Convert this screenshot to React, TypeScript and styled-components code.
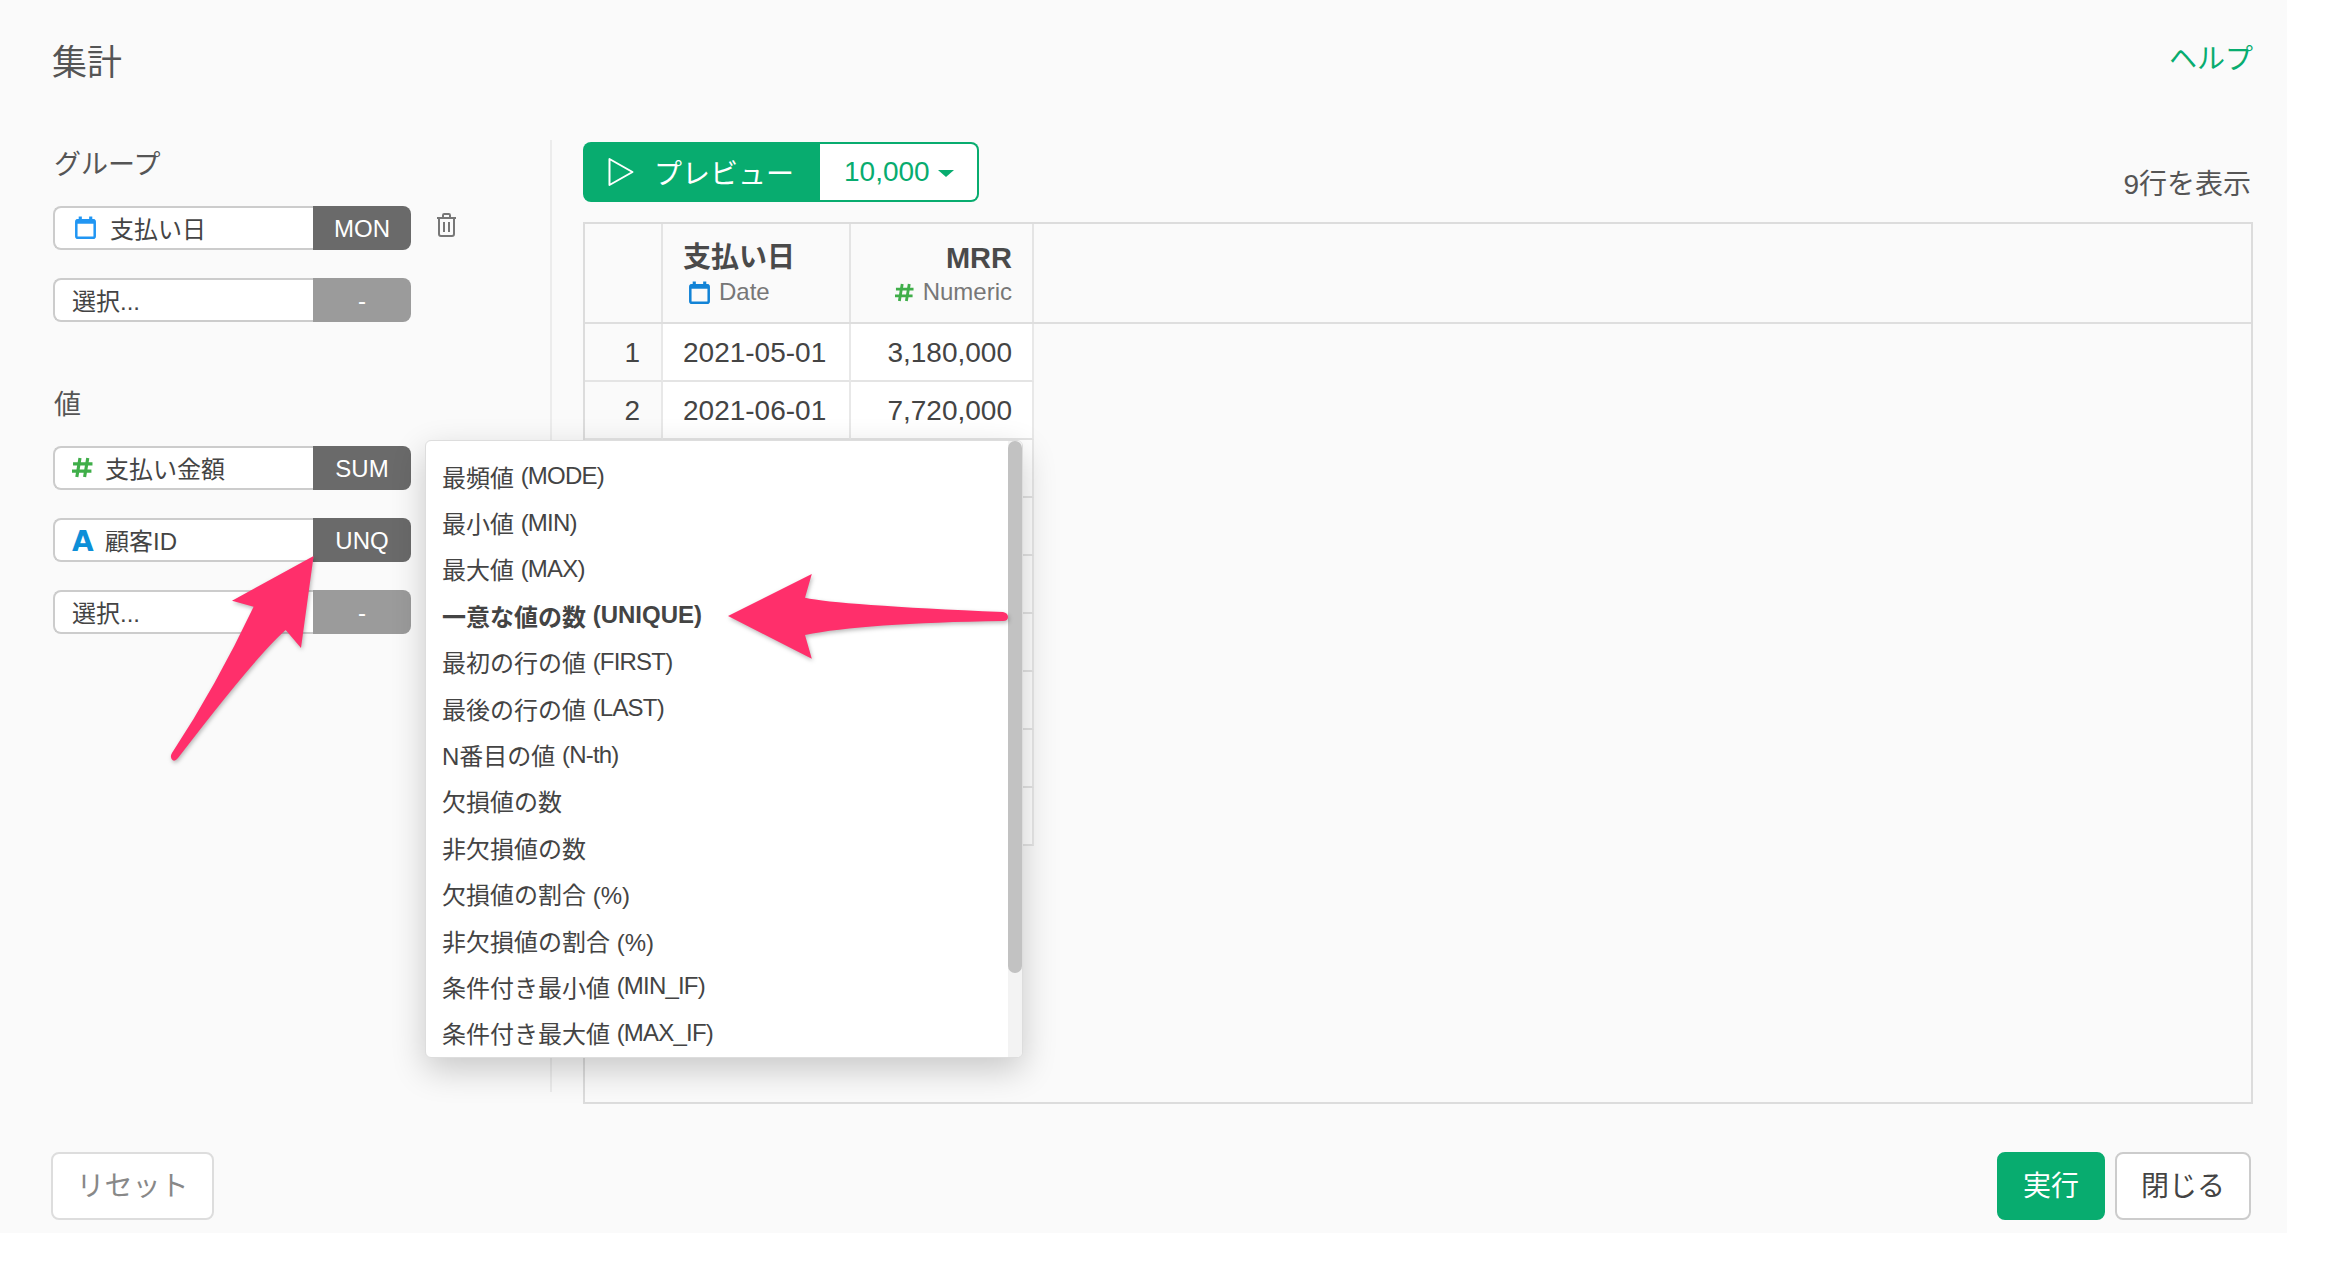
import styled, { createGlobalStyle } from 'styled-components'

const GREEN = '#08ac6f'
const TEXT = '#444'
const FONT = '"Liberation Sans", "Noto Sans CJK JP", sans-serif'

const GlobalStyle = createGlobalStyle`
  html, body { margin: 0; padding: 0; background: #fff; }
  * { box-sizing: border-box; }
  body { font-family: ${FONT}; color: ${TEXT}; }
`

const Panel = styled.div`
  position: relative;
  width: 2287px;
  height: 1233px;
  background: #fafafa;
  display: flex;
  flex-direction: column;
  overflow: hidden;
`
const Header = styled.header`
  height: 140px;
  padding: 38px 34px 0 52px;
  display: flex;
  justify-content: space-between;
  align-items: flex-start;
`
const Title = styled.h1`
  margin: 0;
  font-size: 35px;
  line-height: 50px;
  font-weight: 400;
  color: #555;
`
const HelpLink = styled.a`
  font-size: 28px;
  line-height: 44px;
  color: ${GREEN};
`
const Body = styled.div`
  display: flex;
  align-items: flex-start;
  padding-left: 53px;
  padding-right: 34px;
`
const Sidebar = styled.aside`
  width: 499px;
  height: 952px;
  border-right: 2px solid #ececec;
  padding-top: 8px;
`
const SectionLabel = styled.div<{ $top?: number }>`
  font-size: 27px;
  line-height: 34px;
  color: #555;
  margin-top: ${(p) => p.$top ?? 0}px;
  margin-bottom: 24px;
  padding-left: 1px;
`
const FieldRow = styled.div`
  display: flex;
  align-items: flex-start;
  gap: 25px;
  margin-bottom: 28px;
`
const FieldSelect = styled.div`
  width: 260px;
  height: 44px;
  background: #fff;
  border: 2px solid #ccc;
  border-right: none;
  border-radius: 8px 0 0 8px;
  display: flex;
  align-items: center;
  padding: 0 0 2px 17px;
  font-size: 24px;
  color: ${TEXT};
`
const Badge = styled.div<{ $off?: boolean }>`
  width: 98px;
  height: 44px;
  padding-top: 1px;
  background: ${(p) => (p.$off ? '#9b9b9b' : '#6a6a6a')};
  color: #fff;
  border-radius: 0 8px 8px 0;
  font-size: 24px;
  display: flex;
  align-items: center;
  justify-content: center;
`
const Field = styled.div`
  display: flex;
`
const IconSlot = styled.span<{ $w: number; $pad?: number }>`
  width: ${(p) => p.$w}px;
  padding-left: ${(p) => p.$pad ?? 0}px;
  display: inline-flex;
  align-items: center;
  flex: none;
`
const TypeLetter = styled.span`
  font-family: "DejaVu Sans", sans-serif;
  font-weight: 700;
  font-size: 28px;
  line-height: 1;
  color: #0d8fd8;
  margin-top: 5px;
`
const TrashButton = styled.span`
  display: inline-flex;
  margin-top: 7px;
`
const Main = styled.main`
  margin-left: 31px;
  margin-top: 2px;
  width: 1670px;
`
const Toolbar = styled.div`
  display: flex;
  justify-content: space-between;
  align-items: flex-end;
  height: 60px;
  margin-bottom: 20px;
`
const PreviewGroup = styled.div`
  display: flex;
  height: 60px;
  width: 396px;
`
const PreviewButton = styled.div`
  width: 237px;
  background: ${GREEN};
  border-radius: 8px 0 0 8px;
  color: #fff;
  font-size: 28px;
  display: flex;
  align-items: center;
  gap: 20px;
  padding-left: 25px;
`
const LimitSelect = styled.div`
  flex: 1;
  background: #fff;
  border: 2px solid ${GREEN};
  border-left: none;
  border-radius: 0 8px 8px 0;
  color: ${GREEN};
  font-size: 28px;
  display: flex;
  align-items: center;
  gap: 8px;
  padding-left: 24px;
`
const Caret = styled.span`
  width: 0;
  height: 0;
  border-left: 8px solid transparent;
  border-right: 8px solid transparent;
  border-top: 7px solid ${GREEN};
  margin-top: 3px;
`
const RowCount = styled.div`
  font-size: 28px;
  line-height: 36px;
  color: #555;
  padding-right: 2px;
  margin-bottom: -1px;
`
const Table = styled.div`
  height: 882px;
  border: 2px solid #dcdcdc;
`
const HeadRow = styled.div`
  display: flex;
  height: 100px;
  border-bottom: 2px solid #dedede;
`
const DataRow = styled.div`
  display: flex;
  height: 58px;
`
const Cell = styled.div<{ $w: number; $right?: boolean; $num?: boolean }>`
  width: ${(p) => p.$w}px;
  background: ${(p) => (p.$num ? '#fafafa' : '#fff')};
  border-right: 2px solid #e8e8e8;
  border-bottom: 2px solid #e4e4e4;
  font-size: 28px;
  color: ${TEXT};
  display: flex;
  align-items: center;
  justify-content: ${(p) => (p.$right ? 'flex-end' : 'flex-start')};
  padding: ${(p) => (p.$num ? '2px 21px 0 0' : '2px 20px 0')};
`
const HeadCell = styled.div<{ $w: number; $right?: boolean }>`
  width: ${(p) => p.$w}px;
  border-right: 2px solid #e4e4e4;
  padding: 15px 20px 0;
  display: flex;
  flex-direction: column;
  align-items: ${(p) => (p.$right ? 'flex-end' : 'flex-start')};
`
const ColumnName = styled.div<{ $latin?: boolean }>`
  font-size: ${(p) => (p.$latin ? 29 : 28)}px;
  line-height: 38px;
  font-weight: 700;
  color: #4a4a4a;
`
const ColumnType = styled.div<{ $indent?: boolean }>`
  font-size: 24px;
  line-height: 30px;
  color: #777;
  display: flex;
  align-items: center;
  gap: 9px;
  padding-left: ${(p) => (p.$indent ? 6 : 0)}px;
`
const Footer = styled.footer`
  display: flex;
  justify-content: space-between;
  padding: 0 36px 0 51px;
  position: absolute;
  left: 0;
  right: 0;
  bottom: 13px;
`
const Actions = styled.div`
  display: flex;
  gap: 10px;
`
const Btn = styled.div<{ $w: number; $kind: 'primary' | 'plain' | 'muted' }>`
  width: ${(p) => p.$w}px;
  height: 68px;
  padding-bottom: 4px;
  border-radius: 8px;
  font-size: 28px;
  display: flex;
  align-items: center;
  justify-content: center;
  background: ${(p) => (p.$kind === 'primary' ? GREEN : '#fff')};
  color: ${(p) => (p.$kind === 'primary' ? '#fff' : p.$kind === 'muted' ? '#888' : TEXT)};
  border: 2px solid
    ${(p) => (p.$kind === 'primary' ? GREEN : p.$kind === 'muted' ? '#ddd' : '#ccc')};
`
const Dropdown = styled.div`
  position: absolute;
  left: 425px;
  top: 440px;
  width: 598px;
  height: 618px;
  background: #fff;
  border: 1px solid #ddd;
  border-radius: 6px;
  box-shadow: 0 12px 34px rgba(0, 0, 0, 0.2);
  display: flex;
  overflow: hidden;
`
const OptionList = styled.ul`
  flex: 1;
  margin: 0;
  padding: 12px 0 0 16px;
  list-style: none;
`
const Option = styled.li<{ $active?: boolean }>`
  height: 46.4px;
  display: flex;
  align-items: center;
  white-space: pre;
  font-size: 24px;
  color: ${TEXT};
  font-weight: ${(p) => (p.$active ? 700 : 400)};
`
const OptionCode = styled.span<{ $tight?: boolean }>`
  letter-spacing: ${(p) => (p.$tight ? -0.8 : 0)}px;
`
const Track = styled.div`
  width: 14px;
  background: #f3f3f3;
`
const Thumb = styled.div`
  height: 532px;
  background: #c2c2c2;
  border-radius: 7px;
`
const Overlay = styled.svg<{ $x: number; $y: number }>`
  position: absolute;
  left: ${(p) => p.$x}px;
  top: ${(p) => p.$y}px;
  filter: drop-shadow(1px 2px 2px rgba(0, 0, 0, 0.28));
  overflow: visible;
`

const CalendarIcon = ({ size = 21, color = '#2196f3' }: { size?: number; color?: string }) => (
  <svg width={size} height={size + 2} viewBox="0 0 20 22" fill="none">
    <rect x="1.2" y="4" width="17.6" height="16.8" rx="1.5" stroke={color} strokeWidth="2.4" />
    <rect x="1" y="3.4" width="18" height="4" fill={color} />
    <rect x="3.5" y="0.5" width="3" height="4" fill={color} />
    <rect x="13.5" y="0.5" width="3" height="4" fill={color} />
  </svg>
)

const HashIcon = ({ size = 21 }: { size?: number }) => (
  <svg width={size} height={size} viewBox="0 0 20 20" fill="none" stroke="#3fae49" strokeWidth="3">
    <path d="M7.6 1 L4.6 19 M15 1 L12 19 M1 6.5 H19.5 M0 13.5 H18.5" />
  </svg>
)

const TrashIcon = () => (
  <svg width="21" height="24" viewBox="0 0 20 24" fill="none" stroke="#777" strokeWidth="2">
    <path d="M0.5 5 H19.5" />
    <path d="M6.5 4.5 V2.2 Q6.5 1 7.7 1 H12.3 Q13.5 1 13.5 2.2 V4.5" />
    <path d="M2.5 5 V21 Q2.5 23 4.5 23 H15.5 Q17.5 23 17.5 21 V5" />
    <path d="M7.5 9 V19 M12.5 9 V19" />
  </svg>
)

const PlayIcon = () => (
  <svg width="26" height="30" viewBox="0 0 26 30" fill="none" stroke="#fff" strokeWidth="2" strokeLinejoin="round">
    <path d="M1.5 2 V28 L24.5 15 Z" />
  </svg>
)

const options = [
  { name: '最頻値 ', code: '(MODE)' },
  { name: '最小値 ', code: '(MIN)' },
  { name: '最大値 ', code: '(MAX)' },
  { name: '一意な値の数 ', code: '(UNIQUE)', active: true },
  { name: '最初の行の値 ', code: '(FIRST)' },
  { name: '最後の行の値 ', code: '(LAST)' },
  { name: 'N番目の値 ', code: '(N-th)' },
  { name: '欠損値の数', code: '' },
  { name: '非欠損値の数', code: '' },
  { name: '欠損値の割合 (%)', code: '' },
  { name: '非欠損値の割合 (%)', code: '' },
  { name: '条件付き最小値 ', code: '(MIN_IF)' },
  { name: '条件付き最大値 ', code: '(MAX_IF)' },
]

const rows = [
  { n: '1', date: '2021-05-01', mrr: '3,180,000' },
  { n: '2', date: '2021-06-01', mrr: '7,720,000' },
  { n: '', date: '', mrr: '' },
  { n: '', date: '', mrr: '' },
  { n: '', date: '', mrr: '' },
  { n: '', date: '', mrr: '' },
  { n: '', date: '', mrr: '' },
  { n: '', date: '', mrr: '' },
  { n: '', date: '', mrr: '' },
]

export default function App() {
  return (
    <>
      <GlobalStyle />
      <Panel>
        <Header>
          <Title>集計</Title>
          <HelpLink>ヘルプ</HelpLink>
        </Header>
        <Body>
          <Sidebar>
            <SectionLabel>グループ</SectionLabel>
            <FieldRow>
              <Field>
                <FieldSelect>
                  <IconSlot $w={38} $pad={3}>
                    <CalendarIcon />
                  </IconSlot>
                  支払い日
                </FieldSelect>
                <Badge>MON</Badge>
              </Field>
              <TrashButton>
                <TrashIcon />
              </TrashButton>
            </FieldRow>
            <FieldRow>
              <Field>
                <FieldSelect>選択...</FieldSelect>
                <Badge $off>-</Badge>
              </Field>
            </FieldRow>

            <SectionLabel $top={66}>値</SectionLabel>
            <FieldRow>
              <Field>
                <FieldSelect>
                  <IconSlot $w={33}>
                    <HashIcon />
                  </IconSlot>
                  支払い金額
                </FieldSelect>
                <Badge>SUM</Badge>
              </Field>
            </FieldRow>
            <FieldRow>
              <Field>
                <FieldSelect>
                  <IconSlot $w={33}>
                    <TypeLetter>A</TypeLetter>
                  </IconSlot>
                  顧客ID
                </FieldSelect>
                <Badge>UNQ</Badge>
              </Field>
            </FieldRow>
            <FieldRow>
              <Field>
                <FieldSelect>選択...</FieldSelect>
                <Badge $off>-</Badge>
              </Field>
            </FieldRow>
          </Sidebar>

          <Main>
            <Toolbar>
              <PreviewGroup>
                <PreviewButton>
                  <PlayIcon />
                  プレビュー
                </PreviewButton>
                <LimitSelect>
                  10,000
                  <Caret />
                </LimitSelect>
              </PreviewGroup>
              <RowCount>9行を表示</RowCount>
            </Toolbar>
            <Table>
              <HeadRow>
                <HeadCell $w={78} />
                <HeadCell $w={188}>
                  <ColumnName>支払い日</ColumnName>
                  <ColumnType $indent>
                    <CalendarIcon size={21} color="#1283d6" />
                    Date
                  </ColumnType>
                </HeadCell>
                <HeadCell $w={183} $right>
                  <ColumnName $latin>MRR</ColumnName>
                  <ColumnType>
                    <HashIcon size={19} />
                    Numeric
                  </ColumnType>
                </HeadCell>
              </HeadRow>
              {rows.map((r, i) => (
                <DataRow key={i}>
                  <Cell $w={78} $right $num>
                    {r.n}
                  </Cell>
                  <Cell $w={188}>{r.date}</Cell>
                  <Cell $w={183} $right>
                    {r.mrr}
                  </Cell>
                </DataRow>
              ))}
            </Table>
          </Main>
        </Body>

        <Footer>
          <Btn $w={163} $kind="muted">
            リセット
          </Btn>
          <Actions>
            <Btn $w={108} $kind="primary">
              実行
            </Btn>
            <Btn $w={136} $kind="plain">
              閉じる
            </Btn>
          </Actions>
        </Footer>

        <Dropdown>
          <OptionList>
            {options.map((o) => (
              <Option key={o.name} $active={o.active}>
                {o.name}
                <OptionCode $tight={!o.active}>{o.code}</OptionCode>
              </Option>
            ))}
          </OptionList>
          <Track>
            <Thumb />
          </Track>
        </Dropdown>

        <Overlay $x={171} $y={556} width="144" height="206" viewBox="0 0 144 206">
          <path
            d="M142.6 0 L130 92 L114.7 74 Q85 100 7 202 Q3 207 0.6 203 Q-1 200 1 197 Q45 130 82.6 50.7 L61 44.7 Z"
            fill="#ff2f6b"
          />
        </Overlay>
        <Overlay $x={728} $y={574} width="280" height="85" viewBox="0 0 280 85">
          <path
            d="M0 42 L83.8 0 L77 23.7 Q110 31 275 38 Q280 39 280 43 Q280 47 275 47 Q135 49 77 61 L83.8 84.7 Z"
            fill="#ff2f6b"
          />
        </Overlay>
      </Panel>
    </>
  )
}
